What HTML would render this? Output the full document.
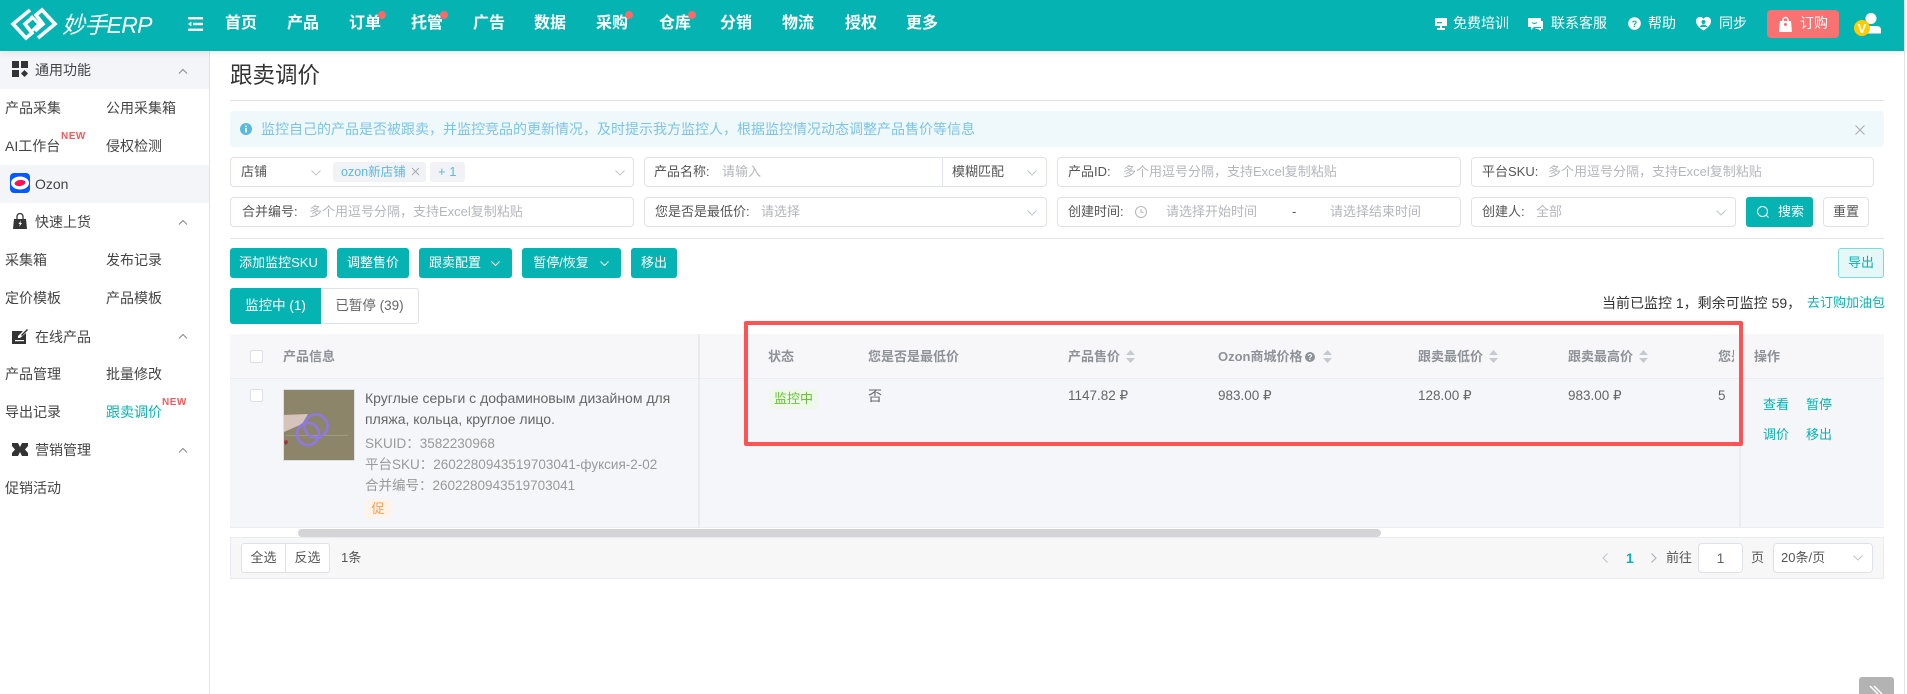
<!DOCTYPE html>
<html lang="zh"><head><meta charset="utf-8"><title>跟卖调价</title>
<style>
html,body{margin:0;padding:0;width:1907px;height:694px;overflow:hidden;background:#fff}
body{position:relative;font-family:"Liberation Sans","Noto Sans CJK SC",sans-serif;font-size:13px;color:#606266}
.a,.t{position:absolute;box-sizing:border-box}
.t{white-space:nowrap;line-height:20px;height:20px}
.n{font-size:16px;font-weight:700;color:#fff;top:14px}
.d{width:8px;height:8px;border-radius:50%;background:#f56c6c;top:11px}
.h{font-size:14px;color:#fff;top:13px}
.s{font-size:14px;color:#444}
.b{background:#f4f5f9;left:0;width:209px}
.box{border:1px solid #dfe1ea;border-radius:4px;background:#fff}
.l{color:#555}.p{color:#b4b6bc}
.btn{background:#04b3b2;border-radius:3px;color:#fff;text-align:center;line-height:30px;height:30px;top:248px;white-space:nowrap}
.th{font-weight:700;color:#8e9198;top:347px;font-size:13px}
.td{color:#666;top:386px;font-size:13.500px}
.g{color:#999;font-size:13.500px}
.op{color:#04b3b2;font-size:13px}
svg{position:absolute;display:block;overflow:visible}
</style></head><body>

<!-- Header -->
<div class="a" style="left:0;top:0;width:1904px;height:51px;background:#04b3b2;box-shadow:0 2px 6px rgba(0,0,0,.08);z-index:2"></div>
<div style="position:absolute;left:0;top:0;z-index:3;width:1907px;height:51px">
<svg style="left:10px;top:7px" width="48" height="34" viewBox="0 0 48 34" fill="none" stroke="#fff" stroke-width="3.6"><path d="M20 3L3 17l13 14 6-5-7-9 8-7"/><path d="M28 31l17-14L32 3l-6 5 7 9-8 7"/><path d="M21 9l8 8-8 8" stroke-width="3"/></svg>
<div class="t" style="left:62px;top:11px;height:28px;line-height:28px;font-size:23px;color:#fff;font-style:italic;letter-spacing:-.7px">妙手ERP</div>
<svg style="left:188px;top:17px" width="15" height="14" viewBox="0 0 15 14" fill="#fff"><rect x="0" y="0" width="15" height="2.4"/><rect x="5" y="5.8" width="10" height="2.4"/><rect x="0" y="11.6" width="15" height="2.4"/><path d="M0 7l3.4-2.4v4.8z"/></svg>
<div class="t n" style="left:225px">首页</div><div class="t n" style="left:287px">产品</div><div class="t n" style="left:349px">订单</div><div class="t n" style="left:411px">托管</div><div class="t n" style="left:473px">广告</div><div class="t n" style="left:534px">数据</div><div class="t n" style="left:596px">采购</div><div class="t n" style="left:659px">仓库</div><div class="t n" style="left:720px">分销</div><div class="t n" style="left:782px">物流</div><div class="t n" style="left:845px">授权</div><div class="t n" style="left:906px">更多</div>
<div class="a d" style="left:378px"></div><div class="a d" style="left:440px"></div><div class="a d" style="left:625px"></div><div class="a d" style="left:688px"></div>
<svg style="left:1434px;top:17px" width="14" height="14" viewBox="0 0 14 14" fill="#fff"><path d="M1 1h12v8H8v2h3v2H3v-2h3V9H1z"/><rect x="3" y="5" width="5" height="1.3" fill="#04b3b2"/></svg>
<div class="t h" style="left:1453px">免费培训</div>
<svg style="left:1528px;top:17px" width="15" height="15" viewBox="0 0 15 15" fill="#fff"><path d="M0 1h13v9H6l-3 3v-3H0z"/><path d="M13 4h2v8h-2v2l-3-2H7l1-1h5z"/><path d="M4 5.500q2.500 2 5 0" stroke="#04b3b2" fill="none"/></svg>
<div class="t h" style="left:1551px">联系客服</div>
<svg style="left:1628px;top:17px" width="13" height="13" viewBox="0 0 13 13"><circle cx="6.500" cy="6.500" r="6.300" fill="#fff"/><text x="6.500" y="10" text-anchor="middle" font-size="9" font-weight="700" fill="#04b3b2" font-family="Liberation Sans">?</text></svg>
<div class="t h" style="left:1648px">帮助</div>
<svg style="left:1696px;top:16px" width="15" height="15" viewBox="0 0 15 15"><path d="M7.500 14.500C2 11 0 8 0 5a4 4 0 0 1 7.500-2A4 4 0 0 1 15 5c0 3-2 6-7.500 9.500z" fill="#fff"/><circle cx="7.500" cy="6" r="2" fill="#04b3b2"/><path d="M3.500 11q4-5 8 0" fill="#04b3b2"/></svg>
<div class="t h" style="left:1719px">同步</div>
<div class="a" style="left:1767px;top:10px;width:72px;height:28px;background:#f87272;border-radius:4px"></div>
<svg style="left:1779px;top:17px" width="13" height="15" viewBox="0 0 13 15" fill="#fff"><path d="M1 4h11l1 11H0z"/><path d="M4 5V3a2.500 2.500 0 0 1 5 0v2" fill="none" stroke="#fff" stroke-width="1.500"/><circle cx="6.500" cy="7.500" r="1.500" fill="#f87272"/></svg>
<div class="t h" style="left:1800px">订购</div>
<svg style="left:1852px;top:12px" width="30" height="30" viewBox="0 0 30 30"><circle cx="19" cy="6.500" r="5.500" fill="#fff"/><path d="M13 21.500v-4q0-3.500 5-3.500h6q5 0 5 3.500v4z" fill="#fff"/><circle cx="10" cy="16" r="8" fill="#fc0"/><text x="10" y="21" text-anchor="middle" font-size="13" font-weight="700" fill="#fff" font-family="Liberation Sans">V</text></svg>
</div>

<!-- page scrollbar edge -->
<div class="a" style="left:1904px;top:0;width:1px;height:694px;background:#e3e3e3"></div>

<!-- Sidebar -->
<div class="a" style="left:209px;top:51px;width:1px;height:643px;background:#e0e2e8"></div>
<div class="a b" style="top:51px;height:38px"></div>
<div class="a b" style="top:165px;height:38px"></div>
<svg style="left:12px;top:61px" width="16" height="16" viewBox="0 0 16 16" fill="#333"><rect width="7" height="7"/><rect x="9" width="7" height="7"/><rect y="9" width="7" height="7"/><path d="M12.500 9l3.500 3.500-3.500 3.500L9 12.500z"/></svg>
<div class="t s" style="left:35px;top:60px">通用功能</div>
<div class="t s" style="left:5px;top:98px">产品采集</div><div class="t s" style="left:106px;top:98px">公用采集箱</div>
<div class="t s" style="left:5px;top:136px">AI工作台</div><div class="t s" style="left:106px;top:136px">侵权检测</div>
<div class="t" style="left:61px;top:130px;color:#f9595c;font-size:10px;font-weight:700;height:14px;line-height:14px;letter-spacing:.5px">NEW</div>
<svg style="left:10px;top:173px" width="20" height="20" viewBox="0 0 20 20"><rect width="20" height="20" rx="4" fill="#005bff"/><ellipse cx="10" cy="10" rx="9" ry="6.500" fill="#fff"/><ellipse cx="10" cy="10" rx="5.500" ry="3" fill="#f91155" transform="rotate(-8 10 10)"/></svg>
<div class="t s" style="left:35px;top:174px">Ozon</div>
<svg style="left:13px;top:213px" width="14" height="16" viewBox="0 0 14 16" fill="#333"><path d="M1 6h12l1 10H0z"/><path d="M4 6V3.500a3 3 0 0 1 6 0V6" fill="none" stroke="#333" stroke-width="1.300"/><path d="M8 7.500L5.500 11H7l-1 3 3-4H7.500z" fill="#fff"/></svg>
<div class="t s" style="left:35px;top:212px">快速上货</div>
<div class="t s" style="left:5px;top:250px">采集箱</div><div class="t s" style="left:106px;top:250px">发布记录</div>
<div class="t s" style="left:5px;top:288px">定价模板</div><div class="t s" style="left:106px;top:288px">产品模板</div>
<svg style="left:12px;top:328px" width="16" height="16" viewBox="0 0 16 16" fill="#333"><path d="M0 3h11L6 8v2h2l6-5v11H0z"/><path d="M9 7l6-6 1 1-6 6z"/><rect x="3" y="12" width="9" height="1.200" fill="#fff"/></svg>
<div class="t s" style="left:35px;top:327px">在线产品</div>
<div class="t s" style="left:5px;top:364px">产品管理</div><div class="t s" style="left:106px;top:364px">批量修改</div>
<div class="t s" style="left:5px;top:402px">导出记录</div><div class="t s" style="left:106px;top:402px;color:#04b3b2">跟卖调价</div>
<div class="t" style="left:162px;top:396px;color:#f9595c;font-size:10px;font-weight:700;height:14px;line-height:14px;letter-spacing:.5px">NEW</div>
<svg style="left:12px;top:443px" width="16" height="13" viewBox="0 0 16 13" fill="#333"><path d="M0 0h6l2 4 2-4h6v3l-3 3.500 3 3.500v3h-6L8 9l-2 4H0v-3l3-3.500L0 3z"/></svg>
<div class="t s" style="left:35px;top:440px">营销管理</div>
<div class="t s" style="left:5px;top:478px">促销活动</div>
<svg style="left:178px;top:68px" width="10" height="6" viewBox="0 0 10 6" fill="none" stroke="#888"><path d="M1 5.500l4-4 4 4"/></svg>
<svg style="left:178px;top:219px" width="10" height="6" viewBox="0 0 10 6" fill="none" stroke="#888"><path d="M1 5.500l4-4 4 4"/></svg>
<svg style="left:178px;top:333px" width="10" height="6" viewBox="0 0 10 6" fill="none" stroke="#888"><path d="M1 5.500l4-4 4 4"/></svg>
<svg style="left:178px;top:447px" width="10" height="6" viewBox="0 0 10 6" fill="none" stroke="#888"><path d="M1 5.500l4-4 4 4"/></svg>

<!-- Title -->
<div class="t" style="left:230px;top:61px;height:30px;line-height:30px;font-size:22.500px;color:#333">跟卖调价</div>
<div class="a" style="left:230px;top:100px;width:1654px;height:1px;background:#dfe1ea"></div>

<!-- Alert -->
<div class="a" style="left:230px;top:111px;width:1654px;height:36px;background:#eff8fb;border-radius:4px"></div>
<svg style="left:240px;top:123px" width="12" height="12" viewBox="0 0 12 12"><circle cx="6" cy="6" r="6" fill="#5ab9dd"/><rect x="5.200" y="5" width="1.600" height="4.500" fill="#fff"/><rect x="5.200" y="2.500" width="1.600" height="1.600" fill="#fff"/></svg>
<div class="t" style="left:261px;top:119px;font-size:14px;color:#7cc4e6">监控自己的产品是否被跟卖，并监控竞品的更新情况，及时提示我方监控人，根据监控情况动态调整产品售价等信息</div>
<svg style="left:1855px;top:125px" width="10" height="10" viewBox="0 0 10 10" stroke="#a8abb2" fill="none"><path d="M.5.500l9 9M9.500.500l-9 9"/></svg>

<!-- Filter boxes row 1 -->
<div class="a box" style="left:230px;top:157px;width:404px;height:30px"></div>
<div class="t l" style="left:241px;top:162px">店铺</div>
<svg style="left:311px;top:170px" width="10" height="6" viewBox="0 0 10 6" fill="none" stroke="#c0c4cc"><path d="M.5.500l4.500 4.500 4.500-4.500"/></svg>
<div class="a" style="left:333px;top:162px;width:93px;height:20px;background:#f0f2f5;border-radius:3px"></div>
<div class="t" style="left:341px;top:162px;color:#5db8e0;font-size:12.500px">ozon新店铺</div>
<svg style="left:412px;top:168px" width="7" height="7" viewBox="0 0 7 7" stroke="#a8abb2" fill="none"><path d="M0 0l7 7M7 0L0 7"/></svg>
<div class="a" style="left:430px;top:162px;width:35px;height:20px;background:#f0f2f5;border-radius:3px"></div>
<div class="t" style="left:438px;top:162px;color:#5db8e0">+ 1</div>
<svg style="left:615px;top:170px" width="10" height="6" viewBox="0 0 10 6" fill="none" stroke="#c0c4cc"><path d="M.5.500l4.500 4.500 4.500-4.500"/></svg>

<div class="a box" style="left:644px;top:157px;width:403px;height:30px"></div>
<div class="a" style="left:942px;top:158px;width:1px;height:28px;background:#dfe1ea"></div>
<div class="t l" style="left:654px;top:162px">产品名称:</div><div class="t p" style="left:722px;top:162px">请输入</div>
<div class="t l" style="left:952px;top:162px">模糊匹配</div>
<svg style="left:1027px;top:170px" width="10" height="6" viewBox="0 0 10 6" fill="none" stroke="#c0c4cc"><path d="M.5.500l4.500 4.500 4.500-4.500"/></svg>

<div class="a box" style="left:1057px;top:157px;width:404px;height:30px"></div>
<div class="t l" style="left:1068px;top:162px">产品ID:</div><div class="t p" style="left:1123px;top:162px">多个用逗号分隔，支持Excel复制粘贴</div>

<div class="a box" style="left:1471px;top:157px;width:403px;height:30px"></div>
<div class="t l" style="left:1482px;top:162px">平台SKU:</div><div class="t p" style="left:1548px;top:162px">多个用逗号分隔，支持Excel复制粘贴</div>

<!-- row 2 -->
<div class="a box" style="left:230px;top:197px;width:404px;height:30px"></div>
<div class="t l" style="left:242px;top:202px">合并编号:</div><div class="t p" style="left:309px;top:202px">多个用逗号分隔，支持Excel复制粘贴</div>
<div class="a box" style="left:644px;top:197px;width:403px;height:30px"></div>
<div class="t l" style="left:655px;top:202px">您是否是最低价:</div><div class="t p" style="left:761px;top:202px">请选择</div>
<svg style="left:1027px;top:210px" width="10" height="6" viewBox="0 0 10 6" fill="none" stroke="#c0c4cc"><path d="M.5.500l4.500 4.500 4.500-4.500"/></svg>
<div class="a box" style="left:1057px;top:197px;width:404px;height:30px"></div>
<div class="t l" style="left:1068px;top:202px">创建时间:</div>
<svg style="left:1135px;top:206px" width="12" height="12" viewBox="0 0 12 12" fill="none" stroke="#b4b6bc"><circle cx="6" cy="6" r="5.500"/><path d="M6 3v3.300h2.800"/></svg>
<div class="t p" style="left:1166px;top:202px">请选择开始时间</div><div class="t l" style="left:1292px;top:202px">-</div><div class="t p" style="left:1330px;top:202px">请选择结束时间</div>
<div class="a box" style="left:1471px;top:197px;width:265px;height:30px"></div>
<div class="t l" style="left:1482px;top:202px">创建人:</div><div class="t p" style="left:1536px;top:202px">全部</div>
<svg style="left:1716px;top:210px" width="10" height="6" viewBox="0 0 10 6" fill="none" stroke="#c0c4cc"><path d="M.5.500l4.500 4.500 4.500-4.500"/></svg>
<div class="a" style="left:1746px;top:197px;width:67px;height:30px;background:#04b3b2;border-radius:3px"></div>
<svg style="left:1757px;top:206px" width="12" height="12" viewBox="0 0 12 12" fill="none" stroke="#fff"><circle cx="5.500" cy="5.500" r="5"/><path d="M9 9l2.500 2.500"/></svg>
<div class="t" style="left:1778px;top:202px;color:#fff">搜索</div>
<div class="a box" style="left:1823px;top:197px;width:46px;height:30px;text-align:center;line-height:28px;color:#555">重置</div>
<div class="a" style="left:230px;top:238px;width:1654px;height:1px;background:#e2e4ea"></div>

<!-- Buttons -->
<div class="a btn" style="left:230px;width:97px">添加监控SKU</div>
<div class="a btn" style="left:337px;width:72px">调整售价</div>
<div class="a btn" style="left:419px;width:93px;padding-right:21px">跟卖配置</div>
<svg style="left:491px;top:261px" width="9" height="5" viewBox="0 0 9 5" fill="none" stroke="#fff"><path d="M.5.500l4 4 4-4"/></svg>
<div class="a btn" style="left:522px;width:99px;padding-right:21px">暂停/恢复</div>
<svg style="left:600px;top:261px" width="9" height="5" viewBox="0 0 9 5" fill="none" stroke="#fff"><path d="M.5.500l4 4 4-4"/></svg>
<div class="a btn" style="left:631px;width:46px">移出</div>
<div class="a" style="left:1838px;top:248px;width:46px;height:30px;background:#e6f7f7;border:1px solid #80d9d9;border-radius:3px;color:#04b3b2;text-align:center;line-height:28px">导出</div>

<!-- Tabs -->
<div class="a" style="left:230px;top:288px;width:91px;height:36px;background:#04b3b2;border-radius:3px 0 0 3px;color:#fff;text-align:center;line-height:36px;font-size:13.500px">监控中 (1)</div>
<div class="a" style="left:321px;top:288px;width:98px;height:36px;border:1px solid #dfe1ea;border-left:0;border-radius:0 3px 3px 0;text-align:center;line-height:34px;font-size:13.500px;color:#666">已暂停 (39)</div>
<div class="t" style="left:1602px;top:293px;font-size:14px;color:#333">当前已监控 1，剩余可监控 59，</div>
<div class="t" style="left:1807px;top:293px;color:#04b3b2">去订购加油包</div>

<!-- Table -->
<div class="a" style="left:230px;top:334px;width:1654px;height:44px;background:#f7f7f9"></div>
<div class="a" style="left:230px;top:378px;width:1654px;height:1px;background:#ebedf3"></div>
<div class="a" style="left:230px;top:379px;width:1654px;height:148px;background:#f4f6fa"></div>
<div class="a" style="left:230px;top:527px;width:1654px;height:1px;background:#ebedf3"></div>
<div class="a" style="left:698px;top:334px;width:2px;height:194px;background:#e9eaee"></div>
<div class="a" style="left:1739px;top:334px;width:2px;height:194px;background:#ebecf0"></div>
<div class="a" style="left:250px;top:350px;width:13px;height:13px;background:#fff;border:1px solid #dcdfe6;border-radius:2px"></div>
<div class="a" style="left:250px;top:389px;width:13px;height:13px;background:#fff;border:1px solid #dcdfe6;border-radius:2px"></div>
<div class="t th" style="left:283px">产品信息</div>
<div class="a" style="left:283px;top:389px;width:72px;height:72px;border:1px solid #dcdfe6;background:#8d8569;overflow:hidden"></div>
<svg style="left:284px;top:390px" width="70" height="70" viewBox="0 0 70 70" fill="none"><rect x="2" y="45" width="62" height="1" fill="#a09a80"/><path d="M0 25l24-1-6 10-18 8z" fill="#d6c4bb"/><path d="M0 51l3-1 1 3-3 2z" fill="#a0303a"/><circle cx="32" cy="36" r="11.500" stroke="#8f78e6" stroke-width="2.600"/><circle cx="24" cy="44" r="11" stroke="#8f78e6" stroke-width="2.600"/></svg>
<div class="t" style="left:365px;top:388px;font-size:14px;color:#666;height:21px;line-height:21px">Круглые серьги с дофаминовым дизайном для</div>
<div class="t" style="left:365px;top:409px;font-size:14px;color:#666;height:21px;line-height:21px">пляжа, кольца, круглое лицо.</div>
<div class="t g" style="left:365px;top:434px">SKUID：3582230968</div>
<div class="t g" style="left:365px;top:455px">平台SKU：2602280943519703041-фуксия-2-02</div>
<div class="t g" style="left:365px;top:476px">合并编号：2602280943519703041</div>
<div class="a" style="left:365px;top:499px;width:26px;height:19px;background:#fff3ea;border-radius:3px;color:#ff9a4d;text-align:center;line-height:19px">促</div>

<div class="t th" style="left:768px">状态</div>
<div class="t th" style="left:868px">您是否是最低价</div>
<div class="t th" style="left:1068px">产品售价</div>
<div class="t th" style="left:1218px">Ozon商城价格</div>
<svg style="left:1305px;top:352px" width="10" height="10" viewBox="0 0 10 10"><circle cx="5" cy="5" r="5" fill="#8e9198"/><text x="5" y="8" text-anchor="middle" font-size="8" font-weight="700" fill="#fff" font-family="Liberation Sans">?</text></svg>
<div class="t th" style="left:1418px">跟卖最低价</div>
<div class="t th" style="left:1568px">跟卖最高价</div>
<div class="t th" style="left:1718px;width:16px;overflow:hidden">您是否</div>
<div class="t th" style="left:1754px">操作</div>
<svg style="left:1126px;top:350px" width="9" height="13" viewBox="0 0 9 13" fill="#c6c9d0"><path d="M4.500 0L9 5H0zM4.500 13L0 8h9z"/></svg>
<svg style="left:1323px;top:350px" width="9" height="13" viewBox="0 0 9 13" fill="#c6c9d0"><path d="M4.500 0L9 5H0zM4.500 13L0 8h9z"/></svg>
<svg style="left:1489px;top:350px" width="9" height="13" viewBox="0 0 9 13" fill="#c6c9d0"><path d="M4.500 0L9 5H0zM4.500 13L0 8h9z"/></svg>
<svg style="left:1639px;top:350px" width="9" height="13" viewBox="0 0 9 13" fill="#c6c9d0"><path d="M4.500 0L9 5H0zM4.500 13L0 8h9z"/></svg>

<div class="a" style="left:769px;top:389px;width:49px;height:20px;background:#eff9e9;border-radius:3px;color:#67c23a;text-align:center;line-height:20px">监控中</div>
<div class="t td" style="left:868px;font-size:14px">否</div>
<div class="t td" style="left:1068px">1147.82 ₽</div>
<div class="t td" style="left:1218px">983.00 ₽</div>
<div class="t td" style="left:1418px">128.00 ₽</div>
<div class="t td" style="left:1568px">983.00 ₽</div>
<div class="t td" style="left:1718px">5</div>
<div class="t op" style="left:1763px;top:395px">查看</div><div class="t op" style="left:1806px;top:395px">暂停</div>
<div class="t op" style="left:1763px;top:425px">调价</div><div class="t op" style="left:1806px;top:425px">移出</div>

<!-- Scrollbar -->
<div class="a" style="left:298px;top:529px;width:1083px;height:8px;background:#d4d4d7;border-radius:4px"></div>

<!-- Footer -->
<div class="a" style="left:230px;top:537px;width:1654px;height:42px;background:#f7f7f8;border:1px solid #e9ebf0"></div>
<div class="a box" style="left:241px;top:543px;width:45px;height:30px;border-radius:3px 0 0 3px;text-align:center;line-height:28px;color:#555">全选</div>
<div class="a box" style="left:285px;top:543px;width:45px;height:30px;border-radius:0 3px 3px 0;text-align:center;line-height:28px;color:#555">反选</div>
<div class="t l" style="left:341px;top:548px">1条</div>
<svg style="left:1602px;top:553px" width="6" height="10" viewBox="0 0 6 10" fill="none" stroke="#c0c4cc"><path d="M5.500.500L1 5l4.500 4.500"/></svg>
<div class="t" style="left:1626px;top:548px;color:#04b3b2;font-weight:700;font-size:14px">1</div>
<svg style="left:1651px;top:553px" width="6" height="10" viewBox="0 0 6 10" fill="none" stroke="#a8abb2"><path d="M.5.500L5 5 .5 9.500"/></svg>
<div class="t l" style="left:1666px;top:548px">前往</div>
<div class="a box" style="left:1698px;top:543px;width:45px;height:30px;text-align:center;line-height:28px;color:#606266;font-size:14px">1</div>
<div class="t l" style="left:1751px;top:548px">页</div>
<div class="a box" style="left:1773px;top:543px;width:100px;height:30px"></div>
<div class="t l" style="left:1781px;top:548px">20条/页</div>
<svg style="left:1853px;top:555px" width="10" height="6" viewBox="0 0 10 6" fill="none" stroke="#c0c4cc"><path d="M.5.500l4.500 4.500 4.500-4.500"/></svg>

<!-- Corner button -->
<div class="a" style="left:1859px;top:677px;width:35px;height:17px;background:#b3b3b3;border-radius:3px 3px 0 0;overflow:hidden"></div>
<svg style="left:1870px;top:686px" width="14" height="8" viewBox="0 0 14 8" fill="none" stroke="#fff" stroke-width="1.500"><path d="M0 0l8 8M4 0l8 8"/></svg>

<!-- Red highlight -->
<div class="a" style="left:744px;top:321px;width:999px;height:125px;border:4px solid #ff5252;border-radius:2px;z-index:5"></div>
</body></html>
